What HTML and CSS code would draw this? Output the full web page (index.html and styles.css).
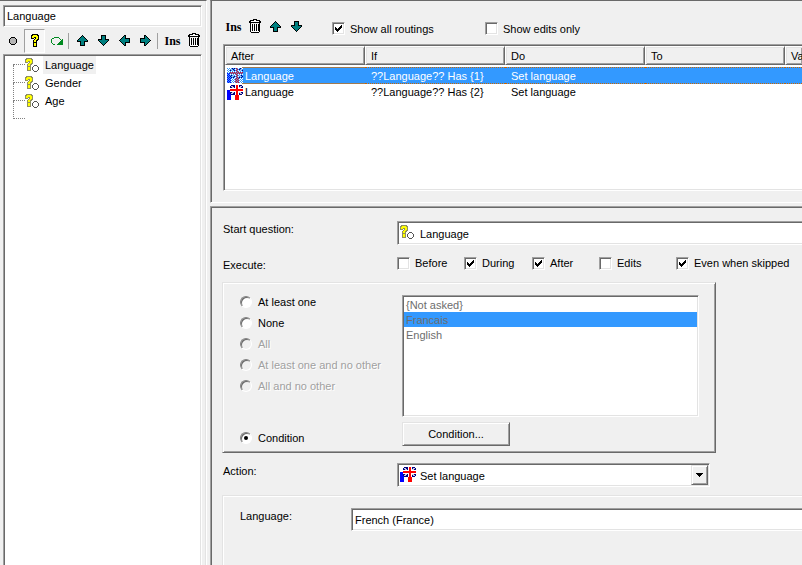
FILE: index.html
```html
<!DOCTYPE html>
<html lang="en">
<head>
<meta charset="utf-8">
<title>Routing editor</title>
<link rel="stylesheet" href="styles.css">
</head>
<body>
<svg class="defs" aria-hidden="true">
  <defs>
    <symbol id="up" viewBox="0 0 11 11"><path d="M5 0h1v1h1v1h1v1h1v1h1v1h1v2H8v4H3V7H0V5h1V4h1V3h1V2h1V1h1z"/><path fill="#008080" d="M5 1h1v1h1v1h1v1h1v1h1v1H7v4H4V6H1V5h1V4h1V3h1V2h1z"/></symbol>
    <symbol id="trash" viewBox="0 0 12 15"><path d="M4 0h4v1h3v1h1v2H0V2h1V1h3zM1 4h1v9h8V4h1v9h-1v1H2v-1H1z"/><path fill="#fff" d="M5 1h2v1H5zM2 2h8v1H2zM2 5h8v8H2z"/><path d="M3 5h1v7H3zM5 5h1v7H5zM7 5h1v7H7zM9 5h1v7H9z"/></symbol>
    <symbol id="question" viewBox="0 0 15 15"><path fill="#909060" d="M1 0h6v1h1v5H7v1H6v6H2V6h1V5h1V4H3v1H0V1h1z"/><path fill="#ff0" d="M2 1h4v1h1v3H6v1H5v2H3V6h1V5h1V3H3v1H1V2h1zM3 9h2v3H3z"/><path fill="#555" d="M9 7h3v1h1v1h1v3h-1v1h-1v1H9v-1H8v-1H7V9h1V8h1z"/><path fill="#fff" d="M9 8h3v1h1v3h-1v1H9v-1H8V9h1z"/></symbol>
    <symbol id="flag" viewBox="0 0 16 15"><path fill="#00f" d="M0 5h4v10H0z"/><path fill="#fff" d="M4 6h4v9H4z"/><path fill="#f00" d="M8 8h4v7H8z"/><path fill="#000080" d="M4 0h11v1h1v8h-1v1H4V9H3V1h1z"/><path fill="#ccd" d="M4 1h2v1h1v1h1v4H7v1H6v1H4V8h1V7h1V3H5V2H4zM15 1h-2v1h-1v1h-1v4h1v1h1v1h2V8h-1V7h-1V3h1V2h1z"/><path fill="#fff" d="M8 0h4v10H8zM3 3h13v4H3z"/><path fill="#f00" d="M9 0h2v10H9zM3 4h13v2H3z"/></symbol>
    <pattern id="dither" width="2" height="2" patternUnits="userSpaceOnUse"><path fill="#39f" d="M0 0h1v1H0zM1 1h1v1H1z"/></pattern>
  </defs>
</svg>
<div class="app">
  <aside class="sidebar">
    <input class="sunken name" type="text" value="Language" aria-label="Name">
    <div class="tools">
      <button aria-label="Answer"><svg width="8" height="8"><path d="M2 0h4v1h1v1h1v4H7v1H6v1H2V7H1V6H0V2h1V1h1z"/><path fill="#b5b5b5" d="M2 1h4v1h1v4H6v1H2V6H1V2h1z"/></svg></button>
      <button class="pressed" aria-label="Question"><svg width="8" height="13"><path d="M1 0h6v1h1v5H7v1H6v6H2V6h1V5h1V4H3v1H0V1h1z"/><path fill="#ff0" d="M2 1h4v1h1v3H6v1H5v2H3V6h1V5h1V3H3v1H1V2h1zM3 9h2v3H3z"/></svg></button>
      <button aria-label="Routing"><svg width="12" height="8"><path fill="#008a20" d="M3 0h5v1H3zM1 1h2v1H1zM8 1h1v1H8zM0 2h1v4H0zM9 2h1v1H9zM1 6h1v1H1zM2 7h2v1H2zM11 2h1v6H6V7h1V6h1V5h1V4h1V3h1z"/></svg></button>
      <span class="sep"></span>
      <button aria-label="Move up"><svg width="11" height="11"><use href="#up"/></svg></button>
      <button aria-label="Move down"><svg class="down" width="11" height="11"><use href="#up"/></svg></button>
      <button aria-label="Move left"><svg class="left" width="11" height="11"><use href="#up"/></svg></button>
      <button aria-label="Move right"><svg class="right" width="11" height="11"><use href="#up"/></svg></button>
      <span class="sep"></span>
      <button class="ins">Ins</button>
      <button aria-label="Delete"><svg width="12" height="15"><use href="#trash"/></svg></button>
    </div>
    <ul class="sunken tree">
      <li><svg width="15" height="15"><use href="#question"/></svg><span class="current">Language</span></li>
      <li><svg width="15" height="15"><use href="#question"/></svg><span>Gender</span></li>
      <li><svg width="15" height="15"><use href="#question"/></svg><span>Age</span></li>
      <li></li>
    </ul>
  </aside>

  <main class="main">
    <section class="pane routes">
      <div class="bar">
        <div class="tools">
          <button class="ins">Ins</button>
          <button aria-label="Delete"><svg width="12" height="15"><use href="#trash"/></svg></button>
          <button aria-label="Move up"><svg width="11" height="11"><use href="#up"/></svg></button>
          <button aria-label="Move down"><svg class="down" width="11" height="11"><use href="#up"/></svg></button>
        </div>
        <label class="check"><input type="checkbox" checked>Show all routings</label>
        <label class="check"><input type="checkbox">Show edits only</label>
      </div>
      <div class="sunken list">
        <table>
          <thead><tr><th>After</th><th>If</th><th>Do</th><th>To</th><th>Va</th></tr></thead>
          <tbody>
            <tr class="selected"><td><svg width="16" height="15"><use href="#flag"/><rect width="16" height="15" fill="url(#dither)"/></svg>Language</td><td>??Language?? Has {1}</td><td>Set language</td><td></td><td></td></tr>
            <tr><td><svg width="16" height="15"><use href="#flag"/></svg>Language</td><td>??Language?? Has {2}</td><td>Set language</td><td></td><td></td></tr>
          </tbody>
        </table>
      </div>
    </section>

    <section class="pane details">
      <div class="row">
        <label class="caption" for="start">Start question:</label>
        <div class="combo">
          <svg width="15" height="15"><use href="#question"/></svg>
          <select class="sunken" id="start"><option>Language</option></select>
        </div>
      </div>
      <div class="row execute">
        <span class="caption">Execute:</span>
        <div class="checks">
          <label class="check"><input type="checkbox">Before</label>
          <label class="check"><input type="checkbox" checked>During</label>
          <label class="check"><input type="checkbox" checked>After</label>
          <label class="check"><input type="checkbox">Edits</label>
          <label class="check"><input type="checkbox" checked>Even when skipped</label>
        </div>
      </div>
      <div class="raised match">
        <div class="radios">
          <label><input type="radio" name="match">At least one</label>
          <label><input type="radio" name="match">None</label>
          <label class="off"><input type="radio" name="match" disabled>All</label>
          <label class="off"><input type="radio" name="match" disabled>At least one and no other</label>
          <label class="off"><input type="radio" name="match" disabled>All and no other</label>
          <label class="last"><input type="radio" name="match" checked>Condition</label>
        </div>
        <div class="answers">
          <select class="sunken" size="4" disabled aria-label="Answers">
            <option>{Not asked}</option>
            <option selected>Francais</option>
            <option>English</option>
          </select>
          <button class="raised">Condition...</button>
        </div>
      </div>
      <div class="row action">
        <label class="caption" for="action">Action:</label>
        <div class="combo narrow">
          <svg width="16" height="15"><use href="#flag"/></svg>
          <select class="sunken" id="action"><option>Set language</option></select>
          <span class="raised drop"><svg width="7" height="4"><path d="M0 0h7v1H6v1H5v1H4v1H3V3H2V2H1V1H0z"/></svg></span>
        </div>
      </div>
      <div class="params">
        <label class="caption" for="language">Language:</label>
        <select class="sunken" id="language"><option>French (France)</option></select>
      </div>
    </section>
  </main>
</div>
</body>
</html>
```
FILE: styles.css
```css
*,
*::before,
*::after {
  box-sizing: border-box;
}

body {
  margin: 0;
  background: #f0f0f0;
  color: #000;
  font: 11px/16px "Liberation Sans", Arial, sans-serif;
}

button,
input,
select {
  margin: 0;
  color: inherit;
  font: inherit;
}

svg {
  display: block;
  flex: none;
  shape-rendering: crispEdges;
}

.defs {
  position: absolute;
  width: 0;
  height: 0;
}

.down { transform: rotate(180deg); }
.left { transform: rotate(-90deg); }
.right { transform: rotate(90deg); }

.sunken {
  appearance: none;
  border: 1px solid;
  border-color: #a0a0a0 #fff #fff #a0a0a0;
  border-radius: 0;
  outline: 0;
  background: #fff;
  box-shadow: inset 1px 1px #696969, inset -1px -1px #e3e3e3;
}

.raised {
  border: 1px solid;
  border-color: #e3e3e3 #696969 #696969 #e3e3e3;
  border-radius: 0;
  background: #f0f0f0;
  box-shadow: inset 1px 1px #fff, inset -1px -1px #a0a0a0;
}

.app {
  display: flex;
  gap: 3px;
  min-height: 100vh;
}

/* Question tree */
.sidebar {
  display: flex;
  flex-direction: column;
  flex: 0 0 207px;
  padding: 4px 3px 0;
  border-top: 1px solid #696969;
  border-right: 1px solid #fff;
  box-shadow: inset -1px 0 #e3e3e3;
}

.name {
  width: 199px;
  height: 22px;
  padding: 0 3px;
}

.tools {
  display: flex;
  align-items: center;
}

.sidebar .tools {
  height: 27px;
  margin: 0 -3px 0 -1px;
}

.tools button {
  display: flex;
  align-items: center;
  justify-content: center;
  flex: none;
  width: 21px;
  height: 24px;
  padding: 0;
  border: 0;
  background: none;
}

.tools .pressed {
  margin: 0 1px;
  border: 1px solid;
  border-color: #a0a0a0 #fff #fff #a0a0a0;
  background: #f7f7f7;
}

.tools .ins {
  font: bold 12px/16px "Liberation Serif", "Times New Roman", serif;
}

.sep {
  width: 1px;
  height: 16px;
  margin: 0 3px 0 1px;
  background: #a0a0a0;
}

.sep:last-of-type {
  margin-right: 4px;
}

.tree {
  flex: 1;
  width: 199px;
  margin: 0;
  padding: 1px 0 0 9px;
  border-bottom: 0;
  box-shadow: inset 1px 1px #696969, inset -1px 0 #e3e3e3;
  list-style: none;
}

.tree li {
  display: flex;
  align-items: center;
  height: 18px;
}

.tree li::before {
  content: "";
  align-self: flex-start;
  width: 12px;
  height: 9px;
  border-bottom: 1px dotted #808080;
}

.tree li + li::before {
  height: 18px;
  margin-top: -9px;
  border-left: 1px dotted #808080;
}

.tree span {
  margin-left: 3px;
  padding: 1px 2px;
}

.tree .current {
  background: #f0f0f0;
}

/* Routing list */
.main {
  display: flex;
  flex: 1;
  flex-direction: column;
  gap: 3px;
  min-width: 0;
}

.pane {
  border-left: 1px solid #a0a0a0;
  box-shadow: inset 1px 0 #696969;
}

.routes {
  padding: 0 0 11px 12px;
  border-top: 1px solid #696969;
  border-bottom: 1px solid #fff;
}

.bar {
  display: flex;
  align-items: center;
  height: 43px;
  padding-top: 12px;
}

.bar .tools {
  width: 109px;
  margin-bottom: 4px;
}

.check,
.radios label {
  display: flex;
  align-items: center;
  gap: 5px;
  white-space: nowrap;
}

.bar .check {
  min-width: 153px;
}

.check input {
  appearance: none;
  width: 13px;
  height: 13px;
  padding: 2px;
  border: 1px solid;
  border-color: #a0a0a0 #fff #fff #a0a0a0;
  background: #fff;
  box-shadow: inset 1px 1px #696969, inset -1px -1px #e3e3e3;
}

.check input:checked::before {
  content: "";
  display: block;
  width: 7px;
  height: 7px;
  background: #000;
  clip-path: polygon(0 2px, 1px 2px, 1px 3px, 2px 3px, 2px 4px, 3px 4px, 3px 3px, 4px 3px, 4px 2px, 5px 2px, 5px 1px, 6px 1px, 6px 0, 7px 0, 7px 3px, 6px 3px, 6px 4px, 5px 4px, 5px 5px, 4px 5px, 4px 6px, 3px 6px, 3px 7px, 2px 7px, 2px 6px, 1px 6px, 1px 5px, 0 5px);
}

.list {
  height: 147px;
  padding: 1px 0 0 1px;
  border-right: 0;
  box-shadow: inset 1px 1px #696969, inset 0 -1px #e3e3e3;
  overflow: hidden;
}

table {
  width: 100%;
  border-collapse: separate;
  border-spacing: 0;
  table-layout: fixed;
}

th {
  width: 140px;
  height: 19px;
  padding: 2px 5px 0;
  border: 1px solid;
  border-color: #fff #696969 #696969 #fff;
  background: #f0f0f0;
  box-shadow: inset 1px 1px #e3e3e3, inset -1px -1px #a0a0a0;
  font-weight: normal;
  line-height: 15px;
  text-align: left;
}

th:last-child {
  width: auto;
  padding-right: 0;
  border-right: 0;
}

thead::after {
  content: "";
  display: table-row;
  height: 2px;
}

td {
  height: 17px;
  padding: 0 6px;
  line-height: 17px;
  white-space: nowrap;
}

td:first-child {
  display: flex;
  align-items: center;
  gap: 2px;
  padding: 0 0 0 2px;
}

.selected td {
  padding-top: 2px;
  border: dotted #cc6600;
  border-width: 1px 0;
  background: #39f;
  color: #fff;
  line-height: 13px;
}

.selected svg {
  margin-top: -2px;
}

.selected td:first-child {
  border-image: linear-gradient(90deg, transparent 18px, #a07a50 18px) 1;
  background: linear-gradient(90deg, #fff 18px, #39f 18px);
}

/* Details */
.details {
  display: flex;
  flex: 1;
  flex-direction: column;
  padding: 14px 0 0 11px;
  border-top: 1px solid #a0a0a0;
  box-shadow: inset 1px 1px #696969;
}

.row {
  display: grid;
  grid-template-columns: 175px 1fr;
  align-items: start;
}

.caption {
  padding-left: 1px;
}

.combo {
  position: relative;
}

.combo > svg {
  position: absolute;
  top: 4px;
  left: 3px;
}

.combo select,
.params select {
  display: block;
  width: 100%;
  height: 24px;
  padding: 2px 0 0 22px;
}

.combo:not(.narrow) select,
.params select {
  border-right: 0;
  box-shadow: inset 1px 1px #696969, inset 0 -1px #e3e3e3;
}

.narrow {
  width: 313px;
}

.drop {
  position: absolute;
  top: 2px;
  right: 2px;
  bottom: 2px;
  display: flex;
  align-items: center;
  justify-content: center;
  width: 17px;
  pointer-events: none;
}

.execute {
  margin: 12px 0 9px;
}

.checks {
  display: grid;
  grid-template-columns: 67px 68px 67px 77px auto;
}

.checks .check {
  height: 13px;
  line-height: 13px;
}

.match {
  display: flex;
  width: 494px;
  padding: 8px 16px 4px 17px;
}

.radios {
  display: flex;
  flex-direction: column;
  width: 162px;
}

.radios label {
  gap: 6px;
  height: 21px;
}

.radios .last {
  margin-top: auto;
}

.radios .off {
  color: #a0a0a0;
  text-shadow: 1px 1px #fff;
}

.radios input {
  appearance: none;
  width: 12px;
  height: 12px;
  padding: 3px;
  border: 1px solid;
  border-color: #808080 #fff #fff #808080;
  border-radius: 50%;
  background: #fff;
  box-shadow: inset 1px 1px #696969;
}

.radios input:disabled {
  background: #f0f0f0;
}

.radios input:checked::before {
  content: "";
  display: block;
  width: 4px;
  height: 4px;
  border-radius: 50%;
  background: #000;
}

.answers {
  padding: 4px 0 2px;
}

.answers select {
  display: block;
  width: 297px;
  height: 122px;
  margin-bottom: 5px;
  padding: 1px;
  color: #6d6d6d;
  opacity: 1;
  overflow: hidden;
}

.answers option {
  height: 15px;
  min-height: 15px;
  padding: 2px 2px 0;
  color: #6d6d6d;
  line-height: 13px;
}

.answers option:checked {
  background: #39f;
}

.answers button {
  width: 108px;
  height: 24px;
  padding: 0;
}

.action {
  margin: 10px 0 8px;
}

.params {
  display: grid;
  flex: 1;
  grid-template-columns: 112px 1fr;
  align-items: start;
  padding: 12px 0 0 16px;
  border: solid #e3e3e3;
  border-width: 1px 0 0 1px;
  box-shadow: inset 1px 1px #fff;
}

.params select {
  height: 23px;
  padding: 1px 0 0 3px;
}
```
